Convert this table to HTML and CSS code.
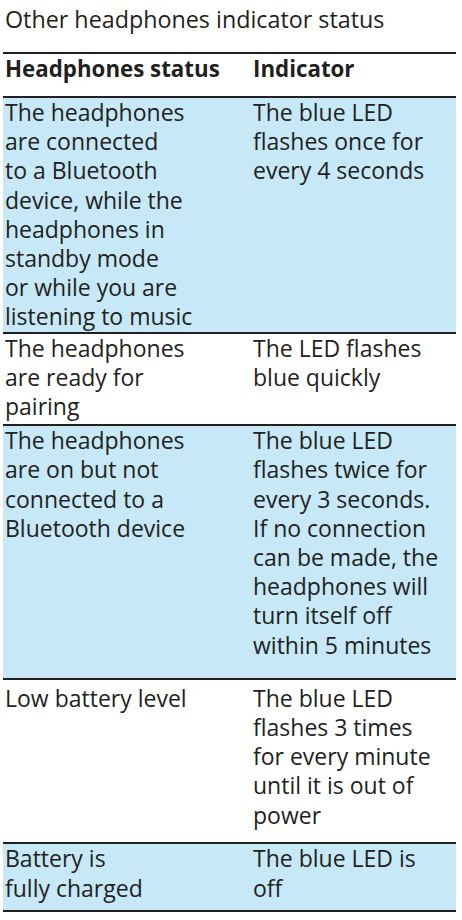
FILE: index.html
```html
<!DOCTYPE html>
<html lang="en">
<head>
<meta charset="utf-8">
<title>Other headphones indicator status</title>
<link rel="stylesheet" href="styles.css">
</head>
<body>
<div class="page">
  <h1 class="title">Other headphones indicator status</h1>
  <div class="table">
    <div class="row head">
      <div class="cell">Headphones status</div>
      <div class="cell">Indicator</div>
    </div>
    <div class="row blue r1">
      <div class="cell">The headphones<br>are connected<br>to a Bluetooth<br>device, while the<br>headphones in<br>standby mode<br>or while you are<br>listening to music</div>
      <div class="cell">The blue LED<br>flashes once for<br>every 4 seconds</div>
    </div>
    <div class="row r2">
      <div class="cell">The headphones<br>are ready for<br>pairing</div>
      <div class="cell">The LED flashes<br>blue quickly</div>
    </div>
    <div class="row blue r3">
      <div class="cell">The headphones<br>are on but not<br>connected to a<br>Bluetooth device</div>
      <div class="cell">The blue LED<br>flashes twice for<br>every 3 seconds.<br>If no connection<br>can be made, the<br>headphones will<br>turn itself off<br>within 5 minutes</div>
    </div>
    <div class="row r4">
      <div class="cell">Low battery level</div>
      <div class="cell">The blue LED<br>flashes 3 times<br>for every minute<br>until it is out of<br>power</div>
    </div>
    <div class="row blue r5">
      <div class="cell">Battery is<br>fully charged</div>
      <div class="cell">The blue LED is<br>off</div>
    </div>
  </div>
</div>
</body>
</html>
```

FILE: styles.css
```css
html, body {
  margin: 0;
  padding: 0;
  background: #ffffff;
}

body {
  font-family: "Open Sans", "Noto Sans", sans-serif;
  color: #231f20;
  font-size: 23px;
  line-height: 29.2px;
}

.page {
  padding: 4px 6px 0 3px;
}

.title {
  margin: 0 0 18.6px 2px;
  font-size: 23.3px;
  font-weight: 400;
  line-height: 29.4px;
  padding-top: 1px;
  margin-bottom: 17.6px;
}

.table {
  border-top: 2.5px solid #231f20;
}

.row {
  display: grid;
  grid-template-columns: 248px 1fr;
  border-bottom: 2.5px solid #231f20;
}

.cell {
  padding-left: 2px;
}

.head {
  height: 44px;
  box-sizing: border-box;
  font-weight: 700;
  font-size: 22.3px;
}

.blue {
  background: #c6e8f7;
}

.r2 { padding-bottom: 3px; }
.r3 { padding-bottom: 18px; }
.r4 { padding-top: 4px; padding-bottom: 12.5px; }
.r5 { padding-bottom: 7px; }
```
